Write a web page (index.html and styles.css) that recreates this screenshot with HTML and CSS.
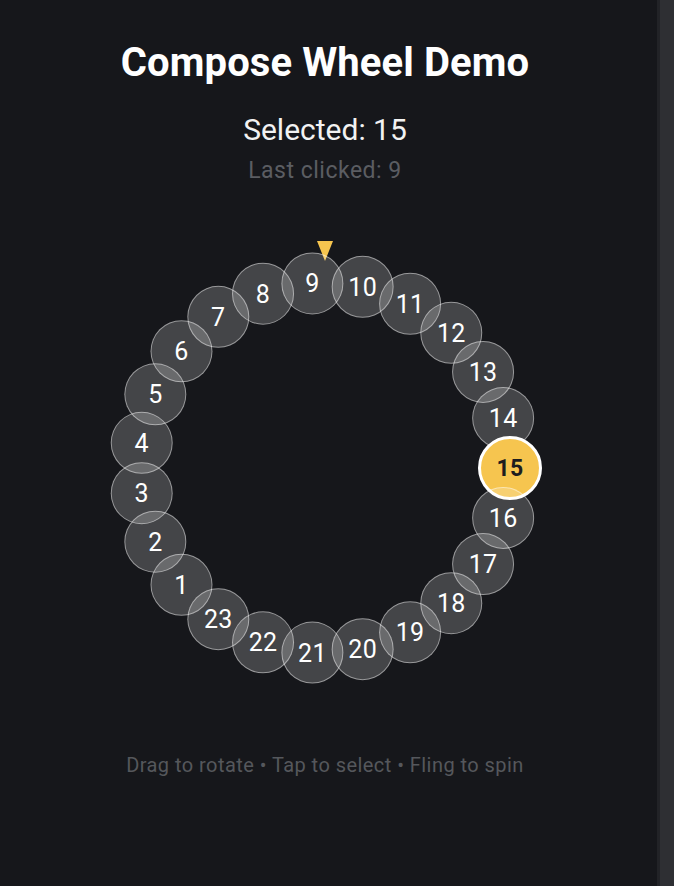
FILE: index.html
```html
<!DOCTYPE html>
<html lang="en">
<head>
<meta charset="utf-8">
<title>Compose Wheel Demo</title>
<link rel="stylesheet" href="styles.css">
</head>
<body>
<div class="app">
  <main class="screen">
    <h1 class="title">Compose Wheel Demo</h1>
    <div class="selected">Selected: 15</div>
    <div class="last">Last clicked: 9</div>
    <div class="wheel">
      <div class="pointer"></div>
      <div class="item" style="--a:-219.13deg">1</div>
      <div class="item" style="--a:-203.48deg">2</div>
      <div class="item" style="--a:-187.83deg">3</div>
      <div class="item" style="--a:-172.17deg">4</div>
      <div class="item" style="--a:-156.52deg">5</div>
      <div class="item" style="--a:-140.87deg">6</div>
      <div class="item" style="--a:-125.22deg">7</div>
      <div class="item" style="--a:-109.57deg">8</div>
      <div class="item" style="--a:-93.91deg">9</div>
      <div class="item" style="--a:-78.26deg">10</div>
      <div class="item" style="--a:-62.61deg">11</div>
      <div class="item" style="--a:-46.96deg">12</div>
      <div class="item" style="--a:-31.30deg">13</div>
      <div class="item" style="--a:-15.65deg">14</div>
      <div class="item item-selected" style="--a:0deg">15</div>
      <div class="item" style="--a:15.65deg">16</div>
      <div class="item" style="--a:31.30deg">17</div>
      <div class="item" style="--a:46.96deg">18</div>
      <div class="item" style="--a:62.61deg">19</div>
      <div class="item" style="--a:78.26deg">20</div>
      <div class="item" style="--a:93.91deg">21</div>
      <div class="item" style="--a:109.57deg">22</div>
      <div class="item" style="--a:125.22deg">23</div>
    </div>
    <div class="hint">Drag to rotate • Tap to select • Fling to spin</div>
  </main>
  <div class="scrollbar"></div>
</div>
</body>
</html>
```
FILE: styles.css
```css
html, body {
  margin: 0;
  padding: 0;
  height: 100%;
  background: #16171b;
}

body {
  font-family: Roboto, "Liberation Sans", sans-serif;
  color: #ffffff;
}

.app {
  display: flex;
  height: 886px;
  overflow: hidden;
}

.screen {
  flex: 1;
  display: flex;
  flex-direction: column;
  align-items: center;
  padding: 40px 7px 0 0;
}

.title {
  margin: 0;
  font-size: 40px;
  line-height: 46px;
  font-weight: 700;
  letter-spacing: 0.1px;
}

.selected {
  margin-top: 26px;
  font-size: 30px;
  line-height: 36px;
  color: #f2f2f2;
}

.last {
  margin-top: 9px;
  font-size: 23px;
  line-height: 28px;
  letter-spacing: 0.5px;
  color: #5b5d62;
}

.wheel {
  position: relative;
  margin-top: 67px;
  width: 432px;
  height: 432px;
}

.pointer {
  position: absolute;
  left: 208px;
  top: -11px;
  width: 0;
  height: 0;
  border-left: 8px solid transparent;
  border-right: 8px solid transparent;
  border-top: 20px solid #f6c54f;
}

.item {
  position: absolute;
  left: 50%;
  top: 50%;
  width: 62px;
  height: 62px;
  margin: -31px 0 0 -31px;
  box-sizing: border-box;
  border-radius: 50%;
  border: 1.5px solid rgba(255, 255, 255, 0.45);
  background: rgba(255, 255, 255, 0.2);
  display: flex;
  align-items: center;
  justify-content: center;
  font-size: 25px;
  line-height: 1;
  letter-spacing: 0.3px;
  color: #ffffff;
  transform: rotate(var(--a)) translateX(185px) rotate(calc(-1 * var(--a)));
}

.item-selected {
  width: 64px;
  height: 64px;
  margin: -32px 0 0 -32px;
  border: 3px solid #ffffff;
  background: #f6c54f;
  color: #1d1d1f;
  font-weight: 700;
  font-size: 23px;
}

.hint {
  margin-top: 69px;
  font-size: 20px;
  line-height: 24px;
  letter-spacing: 0.45px;
  color: #55575c;
}

.scrollbar {
  width: 14px;
  flex: none;
  border-left: 3px solid #222327;
  background: #2e2f33;
}
```
